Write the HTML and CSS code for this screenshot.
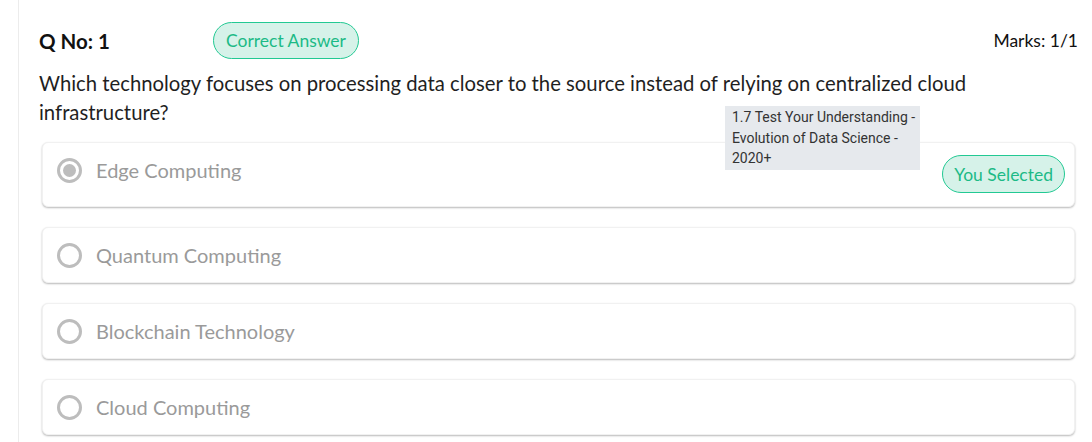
FILE: index.html
```html
<!DOCTYPE html>
<html>
<head>
<meta charset="utf-8">
<link rel="stylesheet" href="styles.css">
</head>
<body>
<div class="page">
  <div class="question">
    <div class="head">
      <div class="qno">Q No: 1</div>
      <div class="badge">Correct Answer</div>
      <div class="marks">Marks: 1/1</div>
    </div>
    <p class="qtext">Which technology focuses on processing data closer to the source instead of relying on centralized cloud infrastructure?</p>
    <div class="tooltip">1.7 Test Your Understanding - Evolution of Data Science - 2020+</div>
    <div class="options">
      <div class="option">
        <span class="radio checked"></span>
        <span class="label">Edge Computing</span>
        <span class="badge selected">You Selected</span>
      </div>
      <div class="option">
        <span class="radio"></span>
        <span class="label">Quantum Computing</span>
      </div>
      <div class="option">
        <span class="radio"></span>
        <span class="label">Blockchain Technology</span>
      </div>
      <div class="option">
        <span class="radio"></span>
        <span class="label">Cloud Computing</span>
      </div>
    </div>
  </div>
</div>
</body>
</html>
```

FILE: styles.css
```css
html, body {
  margin: 0;
  padding: 0;
  background: #fff;
}
body {
  font-family: Lato, "Noto Sans", sans-serif;
  color: #1f1f1f;
}
.page {
  margin-left: 18px;
  border-left: 1px solid #ececec;
  min-height: 442px;
  padding: 22px 14px 0 20px;
  box-sizing: border-box;
}
.question {
  position: relative;
}
.head {
  display: flex;
  align-items: center;
  height: 37px;
}
.qno {
  font-weight: 700;
  font-size: 20.5px;
  width: 174px;
  color: #111;
}
.badge {
  display: inline-flex;
  align-items: center;
  height: 37px;
  box-sizing: border-box;
  padding: 0 12px;
  border: 1px solid #22c993;
  border-radius: 19px;
  background: #d6f2e9;
  color: #1cba86;
  font-size: 17.5px;
}
.marks {
  margin-left: auto;
  font-size: 17.5px;
  color: #111;
}
.qtext {
  margin: 10px 0 0 0;
  font-size: 20.3px;
  line-height: 29px;
  color: #1f1f1f;
}
.tooltip {
  position: absolute;
  left: 686px;
  top: 84px;
  width: 186px;
  padding: 1px 2px 1px 7px;
  background: #e6e9ed;
  font-family: Roboto, "Liberation Sans", sans-serif;
  font-size: 14px;
  line-height: 20.5px;
  color: #333;
  z-index: 2;
}
.options {
  margin-top: 15px;
  padding: 0 3px;
  display: flex;
  flex-direction: column;
  gap: 20px;
}
.option {
  display: flex;
  align-items: flex-start;
  padding: 12px 9px 12px 14px;
  border: 1px solid #f1f1f1;
  border-radius: 6px;
  box-shadow: 0 1px 2px rgba(0, 0, 0, 0.28);
  background: #fff;
}
.radio {
  width: 25px;
  height: 25px;
  margin-top: 3px;
  box-sizing: border-box;
  border: 3px solid #bdbdbd;
  border-radius: 50%;
  flex: none;
  position: relative;
}
.radio.checked::after {
  content: "";
  position: absolute;
  left: 3px;
  top: 3px;
  width: 13px;
  height: 13px;
  border-radius: 50%;
  background: #bdbdbd;
}
.label {
  margin-left: 14px;
  font-size: 20px;
  line-height: 30px;
  color: #9a9a9a;
}
.badge.selected {
  margin-left: auto;
  margin-bottom: 1px;
  height: 38px;
  padding: 0 11px;
}
```
